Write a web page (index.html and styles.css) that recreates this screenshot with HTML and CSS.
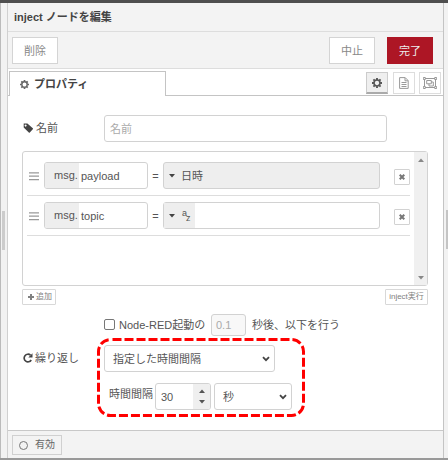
FILE: index.html
```html
<!DOCTYPE html>
<html lang="ja">
<head>
<meta charset="utf-8">
<title>inject ノードを編集</title>
<link rel="stylesheet" href="styles.css">
</head>
<body>
<svg class="defs" width="0" height="0">
  <symbol id="cog" viewBox="0 0 16 16"><path fill="none" stroke="currentColor" stroke-width="2.6" d="M8 3.2a4.8 4.8 0 1 0 0 9.6a4.8 4.8 0 1 0 0-9.6z"/><path stroke="currentColor" stroke-width="3" d="M8 0v3M8 13v3M0 8h3M13 8h3M2.3 2.3l2 2M11.7 11.7l2 2M13.7 2.3l-2 2M4.3 11.7l-2 2"/></symbol>
  <symbol id="bars" viewBox="0 0 10 9"><path stroke="currentColor" stroke-width="1.2" d="M0 .9h10M0 4.2h10M0 7.6h10"/></symbol>
  <symbol id="times" viewBox="0 0 6 6"><path stroke="currentColor" stroke-width="2" d="M.7.7l4.6 4.6M5.3.7L.7 5.3"/></symbol>
  <symbol id="caret" viewBox="0 0 6 4"><path fill="currentColor" d="M0 0h6L3 3.6z"/></symbol>
  <symbol id="chevron" viewBox="0 0 8 6"><path fill="none" stroke="currentColor" stroke-width="1.8" d="M1 1.2l3 3 3-3"/></symbol>
</svg>
<div class="topbar"></div>
<div class="workspace">
  <div class="gutter left"><i></i></div>
  <main class="tray">
    <header class="title">inject ノードを編集</header>
    <div class="toolbar">
      <button class="btn delete">削除</button>
      <button class="btn cancel">中止</button>
      <button class="btn primary">完了</button>
    </div>
    <nav class="tabs">
      <div class="tab"><svg class="tabcog" width="9" height="9"><use href="#cog"/></svg>プロパティ</div>
      <div class="tools">
        <span class="tool active"><svg width="10" height="10"><use href="#cog"/></svg></span>
        <span class="tool"><svg width="10" height="12" viewBox="0 0 10 12" fill="none" stroke="currentColor"><path d="M.6.6h5.6l3 3v7.8H.6zM6 .8v3h3M2.5 5.5h5M2.5 7.5h5M2.5 9.5h5"/></svg></span>
        <span class="tool"><svg width="14" height="12" viewBox="0 0 14 12" fill="none" stroke="currentColor"><path d="M2 1.5h10M2 10.5h10M1.5 2v8M12.5 2v8"/><path d="M.3.5h2v2h-2zM11.7.5h2v2h-2zM.3 9.5h2v2h-2zM11.7 9.5h2v2h-2z"/><path d="M3.7 3.5h4.6v3.3H3.7zM8.3 5h2v4H6V6.8"/></svg></span>
      </div>
    </nav>
    <section class="form">
      <div class="name-row">
        <label><svg width="11" height="10" viewBox="0 0 11 10"><path fill="currentColor" fill-rule="evenodd" d="M.7.4h3.7L9.8 5.3q.5.5 0 1L6.8 9.4q-.5.5-1 0L.7 4.5zM2.6 1.5a1 1 0 1 0 .01 0z"/></svg>名前</label>
        <div class="field name">名前</div>
      </div>
      <div class="list">
        <div class="items">
          <div class="item">
            <svg class="handle" width="10" height="9"><use href="#bars"/></svg>
            <div class="field prop"><span class="prefix">msg.</span><span class="val">payload</span></div>
            <span class="eq">=</span>
            <div class="field typed filled"><svg width="6" height="4"><use href="#caret"/></svg><span class="date">日時</span></div>
            <span class="remove"><svg width="6" height="6"><use href="#times"/></svg></span>
          </div>
          <div class="item">
            <svg class="handle" width="10" height="9"><use href="#bars"/></svg>
            <div class="field prop"><span class="prefix">msg.</span><span class="val">topic</span></div>
            <span class="eq">=</span>
            <div class="field typed"><span class="type"><svg width="6" height="4"><use href="#caret"/></svg><span class="az"><b>a</b><b>z</b></span></span></div>
            <span class="remove"><svg width="6" height="6"><use href="#times"/></svg></span>
          </div>
        </div>
        <div class="scroll"><svg class="flip" width="6" height="4"><use href="#caret"/></svg><svg width="6" height="4"><use href="#caret"/></svg></div>
      </div>
      <div class="list-actions">
        <span class="mini add"><svg width="6" height="6" viewBox="0 0 6 6"><path stroke="currentColor" stroke-width="2" d="M3 0v6M0 3h6"/></svg>追加</span>
        <span class="mini run">inject実行</span>
      </div>
      <div class="once"><span class="check"></span><span class="once-label">Node-RED起動の</span><span class="field delay">0.1</span><span>秒後、以下を行う</span></div>
      <div class="repeat">
        <label><svg width="10" height="10" viewBox="0 0 10 10"><path fill="none" stroke="currentColor" stroke-width="1.7" d="M8.2 7A3.8 3.8 0 1 1 7.5 2.2"/><path fill="currentColor" d="M9.5.3v4.2H5.3z"/></svg>繰り返し</label>
        <div class="repeat-fields">
          <div class="field select mode">指定した時間間隔<svg width="8" height="6"><use href="#chevron"/></svg></div>
          <div class="interval">
            <span class="interval-label">時間間隔</span>
            <div class="field number"><span>30</span><span class="spin"><svg class="flip" width="6" height="4"><use href="#caret"/></svg><svg width="6" height="4"><use href="#caret"/></svg></span></div>
            <div class="field select unit">秒<svg width="8" height="6"><use href="#chevron"/></svg></div>
          </div>
          <svg class="highlight" width="208" height="79"><rect x="1.5" y="1.5" width="205" height="76" rx="12"/></svg>
        </div>
      </div>
    </section>
    <footer class="footer"><span class="enabled"><i></i>有効</span></footer>
  </main>
  <div class="gutter right"><i></i></div>
</div>
<div class="bottombar"></div>
</body>
</html>
```
FILE: styles.css
```css
* { box-sizing: border-box; }
body {
  margin: 0;
  width: 448px;
  height: 460px;
  display: flex;
  flex-direction: column;
  overflow: hidden;
  background: #f3f3f3;
  color: #555;
  font: 11px/16px "Liberation Sans", "Noto Sans CJK JP", sans-serif;
}
svg { display: block; flex: none; }
.defs { position: absolute; }
.topbar { height: 3px; background: #4f4f4f; }
.bottombar { height: 2px; background: #999; }
.workspace { flex: 1; display: flex; min-height: 0; }
.gutter { background: #f2f2f2; }
.gutter i { display: block; height: 39px; }
.gutter.left { width: 7px; border-left: 1px solid #bbb; padding: 208px 0 0 1px; }
.gutter.left i { width: 3px; background: #ccc; }
.gutter.right { width: 4px; padding: 207px 0 0 2px; }
.gutter.right i { background: #c4c4c4; }
.tray {
  width: 437px;
  display: flex;
  flex-direction: column;
  background: #fff;
  border-left: 1px solid #d0d0d0;
  border-right: 1px solid #c4c4c4;
}
.title {
  height: 29px;
  padding: 6px 0 0 6px;
  background: #f3f3f3;
  border-bottom: 1px solid #ddd;
  color: #444;
  font-weight: bold;
}
.toolbar {
  height: 37px;
  display: flex;
  align-items: flex-start;
  padding: 5px 10px 0 4px;
  background: #f3f3f3;
  border-bottom: 1px solid #ddd;
}
.btn {
  width: 46px;
  height: 27px;
  padding: 0;
  border: 1px solid #d4d4d4;
  background: #fff;
  color: #888;
  font: inherit;
}
.cancel { margin-left: auto; margin-right: 12px; }
.primary { background: #ad1625; border-color: #ad1625; color: #eee; }
.tabs {
  height: 27px;
  display: flex;
  align-items: flex-start;
  justify-content: space-between;
  padding: 2px 2px 0 0;
  box-shadow: inset 0 -1px #c4c4c4;
}
.tab {
  width: 157px;
  height: 25px;
  margin-left: 1px;
  display: flex;
  align-items: center;
  gap: 5px;
  padding-left: 10px;
  border: 1px solid #c4c4c4;
  border-bottom: 0;
  background: #fff;
  color: #444;
  font-weight: bold;
}
.tabcog { color: #666; }
.tools { display: flex; gap: 4px; padding-top: 1px; }
.tool {
  width: 22px;
  height: 22px;
  display: grid;
  place-items: center;
  border: 1px solid #ddd;
  color: #999;
}
.tools .tool + .tool { margin-left: 0.5px; }
.tool.active { background: #efefef; border-color: #ccc; border-bottom: 2px solid #aaa; color: #555; }
.form { flex: 1; padding: 19px 14px 0 15px; min-height: 0; }
.field {
  height: 27px;
  display: flex;
  align-items: center;
  border: 1px solid #d2d2d2;
  border-radius: 3px;
  background: #fff;
}
label { width: 81px; flex: none; display: flex; align-items: center; gap: 2px; height: 26px; }
label svg { color: #444; }
.name-row { display: flex; }
.name { width: 283px; padding-left: 5px; color: #aaa; }
.list {
  width: 406px;
  height: 135px;
  margin: 9px 0 3px -1px;
  display: flex;
  justify-content: space-between;
  border: 1px solid #d2d2d2;
  border-radius: 3px;
}
.items { padding: 4px 0 0 4px; }
.item {
  width: 383px;
  height: 40px;
  display: flex;
  align-items: center;
  border-bottom: 1px solid #ddd;
}
.handle { margin: 1px 5px 0 2px; color: #999; }
.prop { width: 104px; overflow: hidden; }
.prefix { width: 34px; height: 100%; padding: 4px 0 0 9px; background: #eee; }
.val { padding: 1px 0 0 2px; }
.eq { width: 15px; text-align: center; }
.typed { width: 217px; color: #555; }
.typed svg { color: #444; }
.filled { background: #eee; padding-left: 5px; }
.date { margin-left: 6px; }
.type { width: 31px; height: 100%; display: flex; align-items: center; padding-left: 5px; background: #eee; }
.az { display: grid; grid-template-columns: 4px 5px; margin-left: 7px; font-size: 9px; line-height: 6px; }
.az b { font-weight: normal; }
.az b + b { padding-top: 5px; }
.remove { width: 16px; height: 16px; margin: 2px 0 0 14px; display: grid; place-items: center; border: 1px solid #d2d2d2; border-radius: 1px; color: #777; }
.scroll { width: 13px; display: flex; flex-direction: column; align-items: center; justify-content: space-between; padding: 6px 0 5px; background: #f0f0f0; color: #888; }
.flip { transform: scaleY(-1); }
.list-actions { width: 406px; margin-left: -1px; display: flex; justify-content: space-between; }
.mini { height: 16px; display: flex; align-items: center; gap: 2px; border: 1px solid #d8d8d8; border-radius: 1px; color: #808080; font-size: 8px; line-height: 12px; }
.add { width: 34px; padding-left: 5px; }
.run { width: 43px; justify-content: center; white-space: nowrap; }
.once { height: 22px; margin: 9px 0 0 81px; display: flex; align-items: center; white-space: nowrap; }
.check { width: 11px; height: 11px; margin-right: 4px; margin-top: -2px; border: 1px solid #777; border-radius: 2px; }
.once-label { width: 92px; }
.delay { width: 35px; height: 22px; margin-right: 6px; padding-left: 4px; background: #f8f8f8; color: #aaa; }
.repeat { margin-top: 9px; display: flex; }
.repeat-fields { position: relative; }
.select { justify-content: space-between; padding: 0 4px 0 8px; }
.select svg { color: #444; }
.mode { width: 171px; }
.interval { margin-top: 11px; display: flex; }
.interval-label { width: 51px; padding: 3px 0 0 5px; white-space: nowrap; }
.number { width: 56px; margin-right: 3px; padding-left: 5px; justify-content: space-between; overflow: hidden; }
.spin { width: 17px; height: 100%; display: flex; flex-direction: column; align-items: center; justify-content: space-between; padding: 5px 0; background: #efefef; color: #555; }
.unit { width: 78px; }
.highlight { position: absolute; left: -7px; top: -7px; }
.highlight rect { fill: none; stroke: #f00; stroke-width: 3; stroke-dasharray: 9 3; stroke-dashoffset: -2; }
.footer { height: 28px; padding: 4px 0 0 4px; background: #f3f3f3; border-top: 1px solid #c8c8c8; }
.enabled { width: 50px; height: 20px; display: flex; align-items: center; gap: 7px; padding-left: 6px; border: 1px solid #d0d0d0; color: #666; font-size: 10px; }
.enabled i { width: 9px; height: 9px; border: 1px solid #777; border-radius: 50%; }
```
